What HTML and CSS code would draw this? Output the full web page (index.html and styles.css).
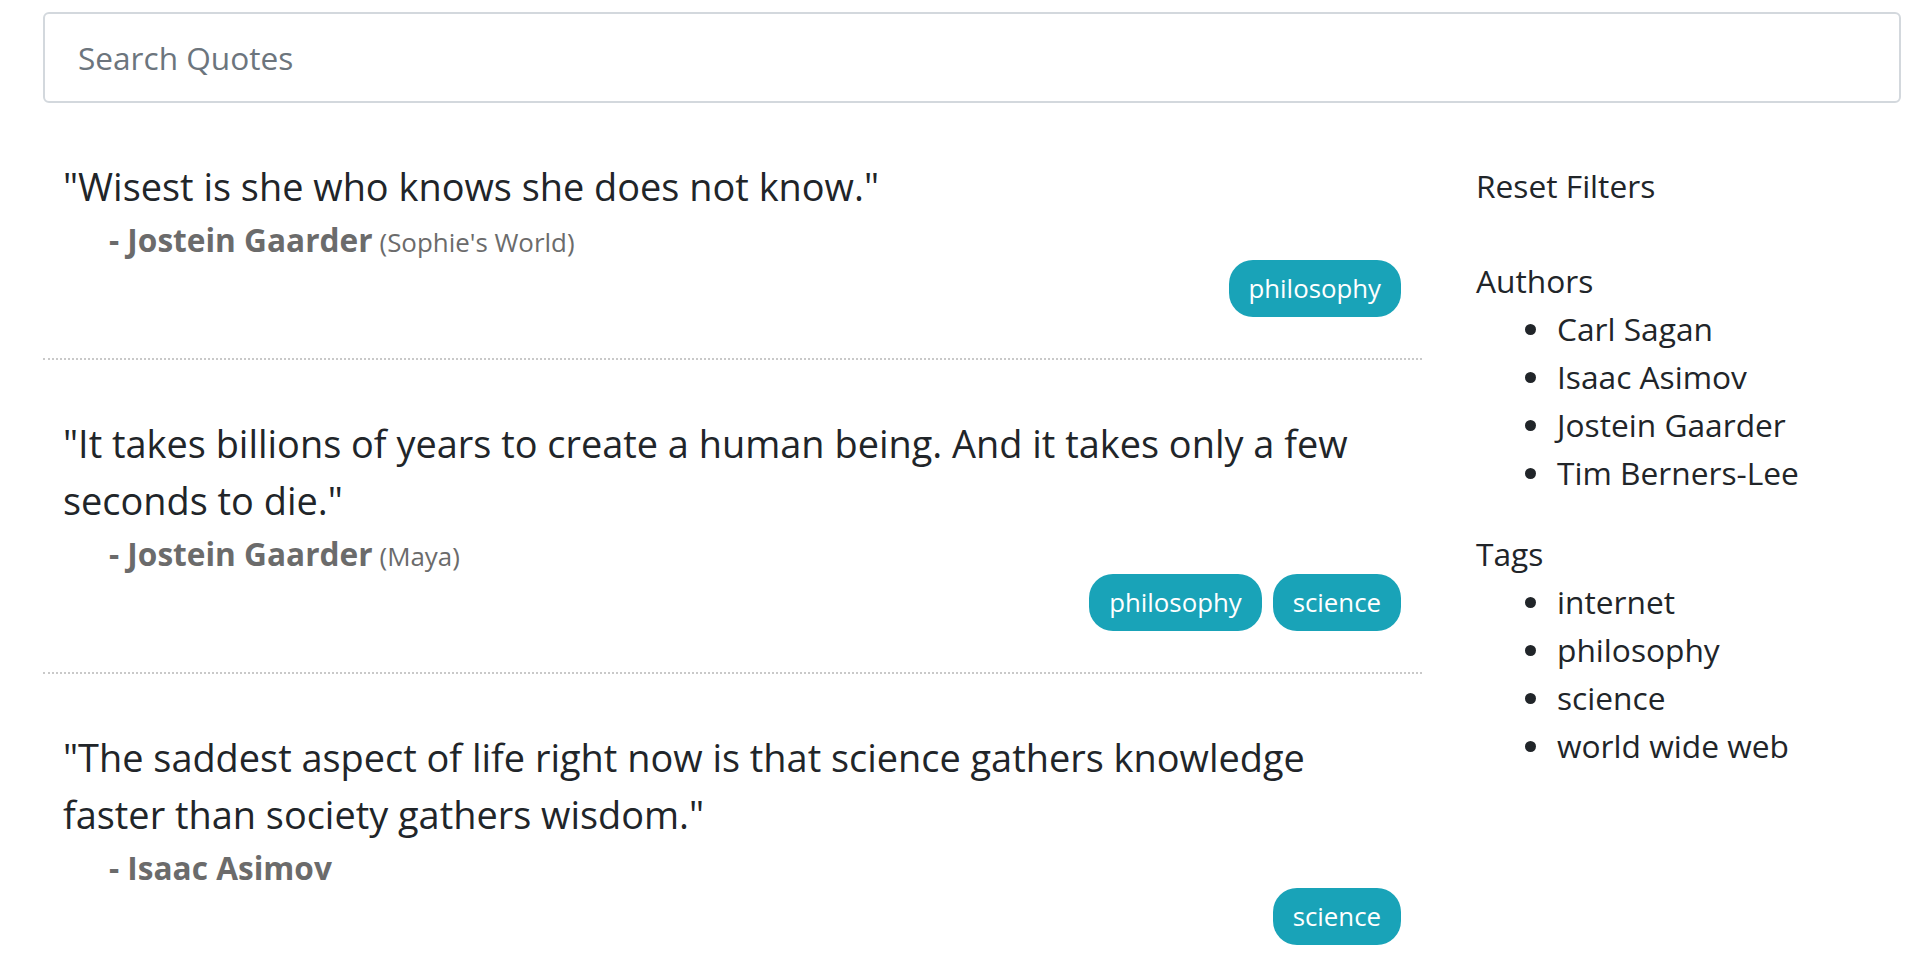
FILE: index.html
```html
<!DOCTYPE html>
<html lang="en">
<head>
<meta charset="utf-8">
<title>Quotes</title>
<link rel="stylesheet" href="styles.css">
</head>
<body>
<div class="page">
  <input class="search" type="text" placeholder="Search Quotes">
  <div class="layout">
    <main class="quotes">
      <div class="quote">
        <p class="quote-text">"Wisest is she who knows she does not know."</p>
        <div class="author"><span class="author-name">- Jostein Gaarder</span> <span class="book">(Sophie's World)</span></div>
        <div class="tags"><span class="badge">philosophy</span></div>
      </div>
      <div class="quote">
        <p class="quote-text">"It takes billions of years to create a human being. And it takes only a few seconds to die."</p>
        <div class="author"><span class="author-name">- Jostein Gaarder</span> <span class="book">(Maya)</span></div>
        <div class="tags"><span class="badge">philosophy</span><span class="badge">science</span></div>
      </div>
      <div class="quote">
        <p class="quote-text">"The saddest aspect of life right now is that science gathers knowledge faster than society gathers wisdom."</p>
        <div class="author"><span class="author-name">- Isaac Asimov</span></div>
        <div class="tags"><span class="badge">science</span></div>
      </div>
    </main>
    <aside class="sidebar">
      <div class="reset">Reset Filters</div>
      <div class="filter-title authors-title">Authors</div>
      <ul class="filter-list">
        <li>Carl Sagan</li>
        <li>Isaac Asimov</li>
        <li>Jostein Gaarder</li>
        <li>Tim Berners-Lee</li>
      </ul>
      <div class="filter-title tags-title">Tags</div>
      <ul class="filter-list">
        <li>internet</li>
        <li>philosophy</li>
        <li>science</li>
        <li>world wide web</li>
      </ul>
    </aside>
  </div>
</div>
</body>
</html>
```
FILE: styles.css
```css
html, body {
  margin: 0;
  padding: 0;
  background: #ffffff;
}

body {
  font-family: "Open Sans", "Noto Sans", sans-serif;
  color: #212529;
  overflow: hidden;
}

.page {
  padding: 12px 23px 0 43px;
}

.search {
  display: block;
  box-sizing: border-box;
  width: 100%;
  height: 91px;
  margin: 0;
  padding: 0 33px;
  border: 2px solid #d3d8dd;
  border-radius: 6px;
  font-family: "Open Sans", "Noto Sans", sans-serif;
  font-size: 31.6px;
  color: #495057;
  background: #fff;
  outline: none;
}

.search::placeholder {
  color: #6c757d;
}

.layout {
  display: grid;
  grid-template-columns: 1379px 1fr;
}

.quote {
  padding: 55px 21px 41px 20px;
  border-bottom: 2px dotted #c9c9c9;
}

.quote:last-child {
  border-bottom: none;
}

.quote-text {
  margin: 0;
  font-size: 37.9px;
  line-height: 57px;
  color: #212529;
}

.author {
  display: flex;
  align-items: baseline;
  gap: 7px;
  height: 40px;
  margin: 5px 0 0 46px;
  color: #6b6b6b;
}

.author-name {
  font-weight: 700;
  font-size: 31.6px;
  line-height: 40px;
}

.book {
  font-size: 25.9px;
  line-height: 40px;
}

.tags {
  display: flex;
  justify-content: flex-end;
  gap: 11px;
}

.badge {
  display: inline-block;
  height: 57px;
  line-height: 57px;
  padding: 0 20px;
  border-radius: 24px;
  background: #19a3b8;
  color: #ffffff;
  font-size: 25.8px;
}

.sidebar {
  padding: 59px 0 0 54px;
  font-size: 31.7px;
  line-height: 48px;
  color: #212529;
}

.authors-title {
  margin-top: 47px;
}

.tags-title {
  margin-top: 33px;
}

.filter-list {
  list-style: none;
  margin: 0;
  padding: 0 0 0 49px;
}

.filter-list li {
  display: flex;
  align-items: center;
  gap: 21px;
}

.filter-list li::before {
  content: "";
  width: 11px;
  height: 11px;
  border-radius: 50%;
  background: #212529;
  flex: none;
}
```
